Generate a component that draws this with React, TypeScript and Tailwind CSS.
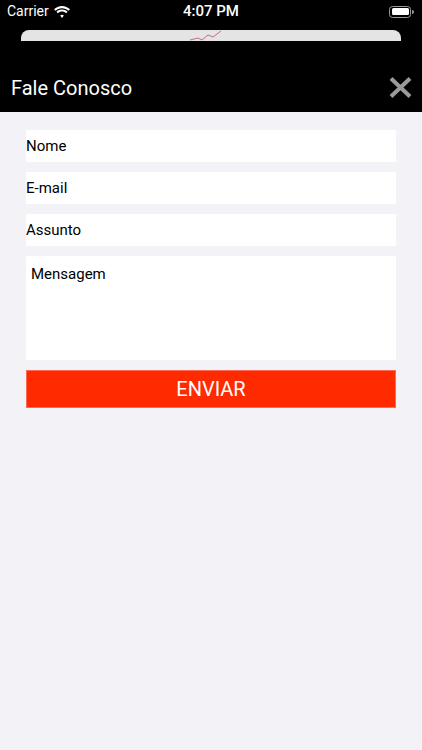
import React from 'react'

const font = { fontFamily: 'Roboto, "Noto Sans", sans-serif' }

function Wifi() {
  return (
    <svg width="16" height="12" viewBox="0 0 16 12" fill="white">
      <path d="M8 2.2c2.5 0 4.8 1 6.5 2.6L16 3.3C13.9 1.3 11.1 0 8 0S2.1 1.3 0 3.3l1.5 1.5C3.2 3.2 5.5 2.2 8 2.2z" />
      <path d="M8 5.6c1.6 0 3 .6 4.1 1.6l1.5-1.5C12.1 4.3 10.2 3.4 8 3.4s-4.1.9-5.6 2.3l1.5 1.5C5 6.2 6.4 5.6 8 5.6z" />
      <path d="M8 8.8c.7 0 1.3.3 1.8.7L8 11.9 6.2 9.5c.5-.4 1.1-.7 1.8-.7z" />
    </svg>
  )
}

function Battery() {
  return (
    <div className="flex items-center">
      <div className="w-[22px] h-[12px] rounded-[3.5px] border border-[#9a9a9a] p-[1.5px]">
        <div className="w-full h-full rounded-[1.5px] bg-white" />
      </div>
      <div className="w-[1.5px] h-[4px] bg-[#9a9a9a] rounded-r ml-[1px]" />
    </div>
  )
}

function Field({ label }: { label: string }) {
  return (
    <div className="h-[32px] bg-white flex items-center text-[15px] text-black">
      {label}
    </div>
  )
}

export default function App() {
  return (
    <div className="w-[422px] h-[750px] bg-[#f2f2f7] flex flex-col" style={font}>
      {/* Status bar + peeking card */}
      <div className="bg-black">
        <div className="h-[22px] flex items-center justify-between px-[7px] pt-[1px] text-white">
          <div className="flex items-center gap-[5px] w-[120px]">
            <span className="text-[14px]">Carrier</span>
            <Wifi />
          </div>
          <span className="text-[15px] font-medium">4:07 PM</span>
          <div className="w-[120px] flex justify-end pr-[1px]">
            <Battery />
          </div>
        </div>
        <div className="h-[19px] flex items-end px-[21px]">
          <div className="h-[11px] w-full rounded-t-[8px] bg-[#e4e4e4] flex justify-center overflow-hidden">
            <svg width="40" height="11" viewBox="0 0 40 11" className="ml-[-6px]">
              <polyline
                points="2,10 10,8 14,10 20,5 25,7 33,1"
                fill="none"
                stroke="#c96a7c"
                strokeWidth="1"
              />
            </svg>
          </div>
        </div>
      </div>

      {/* Header */}
      <div className="h-[71px] bg-black flex items-center justify-between pl-[11px] pr-[10px] pt-[22px]">
        <span className="text-white text-[20px]">Fale Conosco</span>
        <svg width="23" height="21" viewBox="0 0 23 21">
          <path d="M2 1.5 L21 19.5 M21 1.5 L2 19.5" stroke="#9a9a9a" strokeWidth="4" strokeLinecap="butt" />
        </svg>
      </div>

      {/* Form */}
      <div className="px-[26px] pt-[18px] flex flex-col gap-[10px]">
        <Field label="Nome" />
        <Field label="E-mail" />
        <Field label="Assunto" />
        <div className="h-[104px] bg-white pl-[5px] pt-[7px] text-[15px] text-black">Mensagem</div>
        <button className="h-[38px] bg-[#ff2a00] border border-[#ff6a55] text-white text-[20px] flex items-center justify-center">
          ENVIAR
        </button>
      </div>
    </div>
  )
}
